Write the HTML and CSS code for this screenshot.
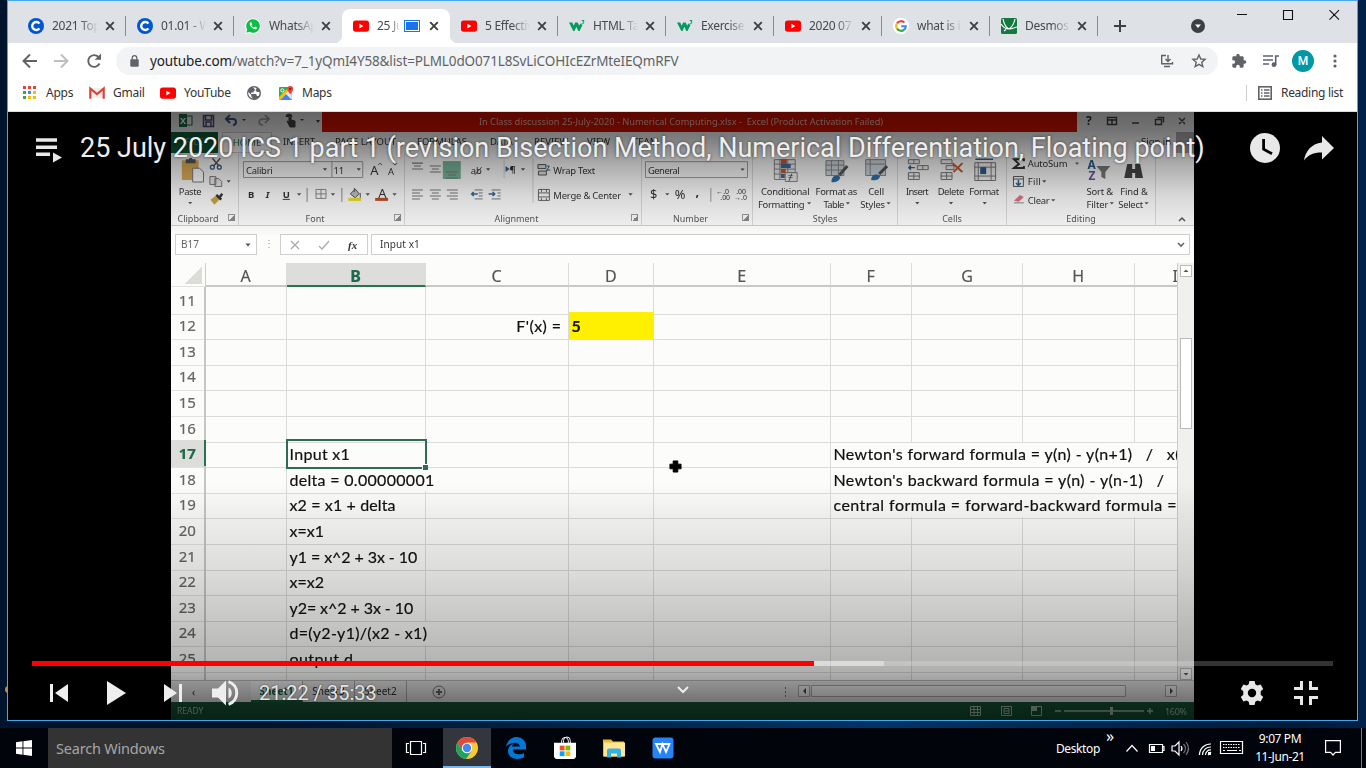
FILE: index.html
```html
<!DOCTYPE html>
<html lang="en">
<head>
<meta charset="utf-8">
<title>25 July 2020 ICS 1 part 1</title>
<link rel="stylesheet" href="styles.css">
</head>
<body>
<svg class="defs" width="0" height="0">
  <symbol id="x" viewBox="0 0 10 10"><path d="M1.2 1.2l7.6 7.6M8.8 1.2L1.2 8.8" stroke="#3c4043" stroke-width="1.9"/></symbol>
  <symbol id="yt" viewBox="0 0 16 16"><rect y="2.5" width="16" height="11.2" rx="2.6" fill="#f00"/><path d="M6.4 5.7v4.8l4-2.4z" fill="#fff"/></symbol>
  <symbol id="cc" viewBox="0 0 16 16"><circle cx="8" cy="8" r="8" fill="#0056d2"/><path d="M11.4 10.4A4 4 0 1 1 11.4 5.6" fill="none" stroke="#fff" stroke-width="2.4"/></symbol>
  <symbol id="w3" viewBox="0 0 16 16"><path d="M0 4.500h3.200l1.600 3.300 1.300-3.300h2.600l1.500 3.300 1-2.300 2.300 1.500-3 6H9.300L7.400 8.800 5.500 13H4.300z" fill="#059862"/><path d="M12.700 2.600h2.300l-1.100 1.300c1.500.2 1.200 2.200-1.200 1.700" fill="none" stroke="#059862"/></symbol>
  <symbol id="dr" viewBox="0 0 7 4"><path d="M.5.3h6L3.500 3.700z" fill="#555"/></symbol>
</svg>

<div class="desktop">
  <div class="shortcut"></div>
  <div class="window">
    <div class="tabstrip">
      <div class="tab first"><svg class="fav"><use href="#cc"/></svg><span class="tt">2021 Topics</span><svg class="cl"><use href="#x"/></svg></div>
      <div class="tab"><svg class="fav"><use href="#cc"/></svg><span class="tt">01.01 - Why</span><svg class="cl"><use href="#x"/></svg></div>
      <div class="tab nosep"><svg class="fav" viewBox="0 0 16 16"><path d="M0 16l1.200-4A7.800 7.800 0 1 1 4 14.900z" fill="#fff"/><path d="M1.300 14.700l.9-3.200A6.800 6.800 0 1 1 4.500 13.800z" fill="#09c144"/><path d="M5.300 4.300c-2 2 1.500 7 5.200 7 1.500-.2 1.700-1.700 1-2.100l-1.400-.6-1 1c-1.300-.4-2.100-1.300-2.600-2.400l.7-1-.8-1.800z" fill="#fff"/></svg><span class="tt">WhatsApp</span><svg class="cl"><use href="#x"/></svg></div>
      <div class="tab active"><svg class="fav"><use href="#yt"/></svg><span class="tt short">25 July</span><svg class="cast" viewBox="0 0 16 12"><rect x=".5" y=".5" width="15" height="11" fill="#fff" stroke="#1a73e8"/><rect x="2" y="2" width="12" height="8" fill="#1a73e8"/></svg><svg class="cl"><use href="#x"/></svg></div>
      <div class="tab"><svg class="fav"><use href="#yt"/></svg><span class="tt">5 Effective</span><svg class="cl"><use href="#x"/></svg></div>
      <div class="tab"><svg class="fav"><use href="#w3"/></svg><span class="tt">HTML Tags</span><svg class="cl"><use href="#x"/></svg></div>
      <div class="tab"><svg class="fav"><use href="#w3"/></svg><span class="tt">Exercise v</span><svg class="cl"><use href="#x"/></svg></div>
      <div class="tab"><svg class="fav"><use href="#yt"/></svg><span class="tt">2020 07 2</span><svg class="cl"><use href="#x"/></svg></div>
      <div class="tab"><svg class="fav" viewBox="0 0 16 16"><circle cx="8" cy="8" r="8" fill="#fff"/><g fill="none" stroke-width="2.100"><path d="M4 5.300A4.800 4.800 0 0 1 11.400 4.600" stroke="#ea4335"/><path d="M4 5.300a4.800 4.800 0 0 0 0 5.400" stroke="#fbbc05"/><path d="M4 10.700a4.800 4.800 0 0 0 7.200.9" stroke="#34a853"/><path d="M11.200 11.600A4.700 4.700 0 0 0 12.800 8.200H8.200" stroke="#4285f4"/></g></svg><span class="tt">what is in</span><svg class="cl"><use href="#x"/></svg></div>
      <div class="tab"><svg class="fav" viewBox="0 0 16 16"><rect width="16" height="16" rx="1.500" fill="#127a3f"/><path d="M0 6c2 3 4 5 8 5s6-2 8-2M2 1c1 5 2 8 6 10M14 1c-1 5-3 8-6 10M5 11.500L3 13" fill="none" stroke="#fff" stroke-width="1.200"/></svg><span class="tt">Desmos |</span><svg class="cl"><use href="#x"/></svg></div>
      <svg class="newtab" viewBox="0 0 12 12"><path d="M6 0v12M0 6h12" stroke="#3c4043" stroke-width="2"/></svg>
      <svg class="tabsearch" viewBox="0 0 14 14"><circle cx="7" cy="7" r="7" fill="#3c4043"/><path d="M4 5.400h6L7 9z" fill="#fff"/></svg>
      <svg class="wctl" viewBox="0 0 104 14"><path d="M0 6.500h10M46.500 2.500h9v9h-9zM92.500 2.200l9.500 9.500M102 2.200l-9.500 9.500" fill="none" stroke="#111" stroke-width="1.100"/></svg>
    </div>

    <div class="toolbar">
      <svg class="nav" viewBox="0 0 88 18"><g fill="none" stroke-width="1.900"><path d="M16 9H3M9 2.500L2.500 9 9 15.500" stroke="#5f6368"/><path d="M33 9h13M40 2.500L46.500 9 40 15.500" stroke="#bcbec1"/><path d="M78.500 11.500A5.900 5.900 0 1 1 77.500 5" stroke="#5f6368"/></g><path d="M80 1.500v6.300h-6.300z" fill="#5f6368"/></svg>
      <div class="omni">
        <svg class="lock" viewBox="0 0 9 12"><rect x=".3" y="4.200" width="8.400" height="7.500" rx="1" fill="#5f6368"/><path d="M2.200 5V3a2.300 2.300 0 0 1 4.600 0v2" fill="none" stroke="#5f6368" stroke-width="1.200"/></svg>
        <span class="url"><b>youtube.com</b>/watch?v=7_1yQmI4Y58&amp;list=PLML0dO071L8SvLiCOHIcEZrMteIEQmRFV</span>
        <svg class="inst" viewBox="0 0 14 14"><path d="M6 1.500H1.700v8.300h10.800V8M4 12.500h6M8 1v6M5.500 5L8 7.500 10.500 5" fill="none" stroke="#5f6368" stroke-width="1.400"/></svg>
        <svg class="star" viewBox="0 0 16 16"><path d="M8 2l1.800 4 4.300.4-3.300 2.900 1 4.300L8 11.400l-3.800 2.200 1-4.300-3.300-2.900L6.200 6z" fill="none" stroke="#5f6368" stroke-width="1.400"/></svg>
      </div>
      <svg class="ext" viewBox="0 0 24 24"><path fill="#5f6368" d="M20.500 11H19V7c0-1.100-.9-2-2-2h-4V3.500a2.500 2.500 0 0 0-5 0V5H4c-1.100 0-2 .9-2 2v3.800h1.500a2.700 2.700 0 0 1 0 5.400H2V20c0 1.100.9 2 2 2h3.800v-1.500a2.700 2.700 0 0 1 5.400 0V22H17c1.100 0 2-.9 2-2v-4h1.500a2.500 2.500 0 0 0 0-5z"/></svg>
      <svg class="queue" viewBox="0 0 16 14"><path d="M0 2h10M0 6h10M0 10h6M12.700 11V2H16" fill="none" stroke="#5f6368" stroke-width="1.600"/><circle cx="11" cy="10.700" r="2.400" fill="#5f6368"/></svg>
      <span class="avatar">M</span>
      <svg class="dots" viewBox="0 0 4 14"><g fill="#5f6368"><circle cx="2" cy="2" r="1.600"/><circle cx="2" cy="7" r="1.600"/><circle cx="2" cy="12" r="1.600"/></g></svg>
    </div>

    <div class="bookmarks">
      <svg class="b1" viewBox="0 0 13 13"><path fill="#ea4335" d="M0 0h3v3H0zM5 0h3v3H5zM10 0h3v3h-3z"/><path fill="#34a853" d="M0 5h3v3H0zM0 10h3v3H0z"/><path fill="#4285f4" d="M5 5h3v3H5z"/><path fill="#fbbc05" d="M10 5h3v3h-3zM5 10h3v3H5zM10 10h3v3h-3z"/></svg><span class="t1">Apps</span>
      <svg class="b2" viewBox="0 0 16 12"><path d="M1 1h14v10H1z" fill="#eee"/><path d="M1.300 11.700V1.500L8 7l6.700-5.500v10.200" fill="none" stroke="#db4437" stroke-width="2.200"/></svg><span class="t2">Gmail</span>
      <svg class="b3"><use href="#yt"/></svg><span class="t3">YouTube</span>
      <svg class="b4" viewBox="0 0 14 14"><circle cx="7" cy="7" r="7" fill="#5f6368"/><path d="M1.300 6l3 3v1.500l1.700 2A5.700 5.700 0 0 1 1.300 6zM6 1.300l3.500.6L9 4 7 4.800 6.500 6.500H4.300L4 8H9l1 2h1.500A5.700 5.700 0 0 0 12.500 6L10 6z" fill="#fff"/></svg>
      <svg class="b5" viewBox="0 0 15 14"><rect y="1" width="13" height="13" rx="1" fill="#34a853"/><path d="M0 13L12 1l1 12z" fill="#e8eaed"/><path d="M1 14L7 8l6 6z" fill="#4285f4"/><path d="M0 11L9 2l1 2-9 10H0z" fill="#fbbc05"/><circle cx="3.400" cy="4.400" r="1.600" fill="none" stroke="#fff"/><path d="M11.200 9C10.500 6 8.200 5.500 8.200 3a3 3 0 0 1 6 0c0 2.500-2.300 3-3 6z" fill="#ea4335"/><circle cx="11.200" cy="3" r="1.100" fill="#801a1a"/></svg><span class="t5">Maps</span>
      <div class="reading"><svg viewBox="0 0 14 14"><rect x=".8" y=".8" width="12.400" height="12.400" fill="none" stroke="#5f6368" stroke-width="1.600"/><path d="M3 4h1.500M6 4h5.500M3 7h1.500M6 7h5.500M3 10h1.500M6 10h5.500" stroke="#5f6368" stroke-width="1.400"/></svg><span>Reading list</span></div>
    </div>

    <div class="player">
      <div class="frame">
        <div class="xtitle">
          <svg class="quick" viewBox="171 112 151 20"><rect x="179" y="114" width="8" height="13" fill="#1b6b48"/><rect x="186" y="116" width="6" height="9" fill="none" stroke="#1b6b48"/><text x="180" y="124" class="xl">X</text><path d="M203.500 115.500h10v11h-10zM205.500 116v4h6v-4M206 126v-4h5v4" fill="none" stroke="#51487c" stroke-width="1.500"/><path d="M227 119h6c4 0 4 6 0 6M230 115l-4 4 4 4" fill="none" stroke="#37568d" stroke-width="2"/><path d="M269 119h-6c-5 0-5 6 0 6M265 115l4 4-4 4" fill="none" stroke="#999" stroke-width="1.600"/><path d="M289 116v6l-2-1 3 6h5v-6l-4-1v-4zM286 117a3 3 0 0 1 6 0" fill="#444" stroke="#444"/><g fill="#444"><path d="M242 119h4l-2 2zM300 119h4l-2 2zM316 120h4l-2 3z"/></g></svg>
          <div class="redbar">In Class discussion 25-July-2020 - Numerical Computing.xlsx -&nbsp; Excel (Product Activation Failed)</div>
          <svg class="xctl" viewBox="1077 112 117 20"><text x="1086" y="125" class="q">?</text><path d="M1107.500 117.500h9v7h-9zM1107 120h10M1112 119v5M1132 123h7M1155.500 119.500h6v5h-6zM1157.500 117.500h6v5M1179 118l6 6M1185 118l-6 6" fill="none" stroke="#444" stroke-width="1.400"/></svg>
        </div>
        <div class="xtabs"><span class="file">FILE</span><span class="home">HOME</span><span class="m1">INSERT</span><span class="m2">PAGE LAYOUT</span><span class="m3">FORMULAS</span><span class="m4">DATA</span><span class="m5">REVIEW</span><span class="m6">VIEW</span><span class="m7">TEAM</span><span class="sign">Sign in</span><span class="face"></span></div>
        <div class="ribbon">
          <div class="grp g1"><svg viewBox="171 153 68 57"><rect x="182" y="160" width="17" height="20" fill="#d9ac56"/><path d="M186 163v-4h3q2-3 4 0h3v4z" fill="#555"/><path d="M193 168h7l4 4v10h-11z" fill="#fff" stroke="#777"/><path d="M213 158l7 8M221 158l-7 8" stroke="#555" stroke-width="1.500"/><circle cx="213" cy="167" r="2" fill="none" stroke="#3b5f8f" stroke-width="1.300"/><circle cx="220" cy="167" r="2" fill="none" stroke="#3b5f8f" stroke-width="1.300"/><path d="M210.500 176.500h6v8h-6zM215.500 178.500h4l3 3v5h-7z" fill="#e8e8e8" stroke="#777"/><path d="M211 200l7-5 3 4-6 6z" fill="#c7a43e"/><path d="M217 195l5 5M220 198l3-4" stroke="#333" stroke-width="2.500"/><text x="179" y="195" textLength="23">Paste</text><use href="#dr" x="188" y="202" width="5" height="3"/><use href="#dr" x="227" y="180" width="5" height="3"/></svg><div class="gl">Clipboard</div></div>
          <div class="grp g2"><svg viewBox="239 153 166 57"><path d="M243.500 161.500h120v16h-120zM332.500 161.500v16" fill="none" stroke="#999"/><text x="246" y="174" textLength="27">Calibri</text><text x="334" y="174">11</text><use href="#dr" x="323" y="168" width="5" height="3"/><use href="#dr" x="357" y="168" width="5" height="3"/><text x="371" y="175" class="big">A</text><text x="389" y="175">A</text><path d="M379 165l2-2 2 2M394 163l2 2 2-2" stroke="#356399" fill="none"/><g class="bold"><text x="248" y="198">B</text><text x="266" y="198" font-style="italic">I</text><text x="283" y="198" text-decoration="underline">U</text></g><path d="M316.500 189.500h10v9h-10zM321.500 189v10M316 194h11M307.500 188v14M342.500 188v14" fill="none" stroke="#888"/><path d="M351 194l5-5 4 5-4 4zM355 192v-4M361 193v5" fill="#bbb" stroke="#555"/><path d="M349 198h13v3h-13z" fill="#e8d91f"/><text x="379" y="198" class="big">A</text><path d="M376 198h13v3h-13z" fill="#b85024"/><use href="#dr" x="297" y="193" width="5" height="3"/><use href="#dr" x="331" y="193" width="5" height="3"/><use href="#dr" x="366" y="193" width="5" height="3"/><use href="#dr" x="393" y="193" width="5" height="3"/></svg><div class="gl">Font</div></div>
          <div class="grp g3"><svg viewBox="405 153 237 57"><rect x="443" y="161" width="18" height="18" fill="#75b397"/><path d="M412 163h11M414 166h7M412 169h11M430 166h11M432 169h7M430 172h11M446 172h12M448 175h8M446 178h12M412 190h11M412 193h8M412 196h11M412 199h8M430 190h11M432 193h7M430 196h11M432 199h7M447 190h11M450 193h8M447 196h11M450 199h8" stroke="#777" stroke-width="1.100"/><text x="471" y="174">ab</text><path d="M475 175l7-8" stroke="#555"/><path d="M506 166v6l4-3z" fill="#2c6799"/><text x="510" y="173" class="bold">¶</text><path d="M475 190h8M479 193h4M479 196h4M475 199h8M492 190h9M498 193h3M498 196h3M492 199h9" stroke="#777"/><path d="M478 194h-6M474 192l-2 2 2 2M489 194h6M493 192l2 2-2 2" stroke="#2c6799" stroke-width="1.600" fill="none"/><path d="M533.500 158v45M504.500 160v18" stroke="#ccc"/><path d="M538.500 164.500h8v4h-8zM539 171h8v4h-8zM547 170h4" fill="#ddd" stroke="#555"/><path d="M547 166h3l-3 5" fill="none" stroke="#356399"/><text x="554" y="174" textLength="42">Wrap Text</text><path d="M539 189.500h11v11h-11zM539 193h11M539 197h11M542 189v3M547 189v3M542 198v3M547 198v3" fill="none" stroke="#666"/><text x="554" y="199" textLength="68">Merge &amp; Center</text><use href="#dr" x="486" y="168" width="5" height="3"/><use href="#dr" x="521" y="168" width="5" height="3"/><use href="#dr" x="629" y="193" width="5" height="3"/></svg><div class="gl">Alignment</div></div>
          <div class="grp g4"><svg viewBox="642 153 111 57"><path d="M645.500 161.500h103v16h-103zM711.500 188v14" fill="none" stroke="#999"/><text x="648" y="174" textLength="32">General</text><use href="#dr" x="741" y="168" width="5" height="3"/><text x="650" y="199" class="big">$</text><text x="675" y="199" class="big">%</text><text x="696" y="196" class="big bold">,</text><use href="#dr" x="665" y="193" width="5" height="3"/><g class="tiny"><text x="717" y="194">←.0</text><text x="721" y="200">.00</text><text x="737" y="194">.00</text><text x="735" y="200">→.0</text></g></svg><div class="gl">Number</div></div>
          <div class="grp g5"><svg viewBox="753 153 145 57"><path d="M774.500 159.500h21v20h-21zM774 164h22M774 169h22M774 174h22M780 159v20M788 159v20" fill="#eee" stroke="#888"/><path d="M781 159h6v5h-6zM781 169h5v4h-5z" fill="#c35a2e"/><path d="M781 164h10v4h-10zM781 174h4v4h-4z" fill="#42699b"/><path d="M785.500 172.500h12v9h-12z" fill="#eee" stroke="#888"/><text x="788" y="180">≠</text><path d="M826.500 160.500h18v15h-18zM826 165h19M826 170h19M832 160v15M839 160v15M866.500 159.500h20v16h-20zM867 164h20M871 159v16" fill="#ccd5de" stroke="#888"/><path d="M848 166l-8 9M888 166l-8 8" stroke="#555" stroke-width="3"/><path d="M832 182c0-7 6-8 9-5-1 4-4 6-9 5zM872 180c0-6 6-7 9-4-1 4-4 5-9 4z" fill="#2f6ea8"/><text x="761" y="195" textLength="49">Conditional</text><text x="758" y="208" textLength="47">Formatting</text><text x="816" y="195" textLength="42">Format as</text><text x="824" y="208" textLength="21">Table</text><text x="869" y="195" textLength="16">Cell</text><text x="861" y="208" textLength="25">Styles</text><use href="#dr" x="807" y="202" width="5" height="3"/><use href="#dr" x="846" y="202" width="5" height="3"/><use href="#dr" x="887" y="202" width="5" height="3"/></svg><div class="gl">Styles</div></div>
          <div class="grp g6"><svg viewBox="898 153 109 57"><path d="M908.500 159.500h11v4h-11zM914 159v4M908.500 172.500h11v7h-11zM914 172v8M908 176h12M917.500 165.500h11v4h-11zM923 165v4M941.500 159.500h11v4h-11zM946.500 165.500h8v4h-8zM941.500 172.500h11v7h-11zM947 172v8M941 176h12M975.500 162.500h21v18h-21zM979 162v19M992 162v19M975 167h22M975 176h22" fill="#eee" stroke="#777"/><path d="M909 167.500h6M911 165.500l-2 2 2 2M976 159h18" stroke="#2f6593" stroke-width="1.500" fill="none"/><path d="M953 163l10 9M963 163l-9 9" stroke="#c35a2e" stroke-width="2"/><path d="M981 167h6v7h-6z" fill="#285a8f"/><text x="906" y="195" textLength="23">Insert</text><text x="938" y="195" textLength="27">Delete</text><text x="970" y="195" textLength="30">Format</text><use href="#dr" x="915" y="202" width="5" height="3"/><use href="#dr" x="949" y="202" width="5" height="3"/><use href="#dr" x="983" y="202" width="5" height="3"/></svg><div class="gl">Cells</div></div>
          <div class="grp g7"><svg viewBox="1007 153 149 57"><path d="M1024 161v-2h-10l5 5-5 4h10v-2" fill="none" stroke="#333" stroke-width="2"/><text x="1028" y="167" textLength="40">AutoSum</text><path d="M1013.500 176.500h10v10h-10zM1013 179h11" fill="#fff" stroke="#555"/><path d="M1018.500 180v5M1016 183l2.500 2.500 2.500-2.500" stroke="#2f6593" stroke-width="1.600" fill="none"/><text x="1028" y="185" textLength="13">Fill</text><path d="M1014 201l6-6 4 2-5 5z" fill="#dd7183"/><path d="M1014 203h10" stroke="#888"/><text x="1028" y="204" textLength="22">Clear</text><text x="1088" y="169" class="az blue">A</text><text x="1089" y="180" class="az violet">Z</text><path d="M1097 166h14l-5 6v7l-4-2v-5z" fill="#777"/><path d="M1125 178l3-14h5v5h3v-5h5l3 14h-8v-5h-3v5z" fill="#444"/><text x="1087" y="195" textLength="27">Sort &amp;</text><text x="1087" y="208" textLength="22">Filter</text><text x="1121" y="195" textLength="28">Find &amp;</text><text x="1119" y="208" textLength="25">Select</text><use href="#dr" x="1075" y="162" width="5" height="3"/><use href="#dr" x="1042" y="180" width="5" height="3"/><use href="#dr" x="1051" y="199" width="5" height="3"/><use href="#dr" x="1110" y="202" width="5" height="3"/><use href="#dr" x="1145" y="202" width="5" height="3"/></svg><div class="gl">Editing</div></div>
          <svg class="collapse" viewBox="0 0 8 6"><path d="M1 5l3-3 3 3" fill="none" stroke="#555" stroke-width="1.500"/></svg>
        </div>
        <div class="fbar">
          <div class="fbox name">B17<svg><use href="#dr"/></svg></div><span class="fdots">⋮</span>
          <div class="fbox fx"><svg viewBox="0 0 86 20"><path d="M10 6l8 8M18 6l-8 8M38 11l3 3 7-8" fill="none" stroke="#aaa" stroke-width="1.300"/><text x="67" y="14">fx</text></svg></div>
          <div class="fbox val">Input x1<svg viewBox="0 0 8 6"><path d="M1 1l3 3 3-3" fill="none" stroke="#666" stroke-width="1.600"/></svg></div>
        </div>
        <div class="sheet">
          <div class="grid">
            <div class="row head"><b class="corner"></b><i>A</i><i class="sel">B</i><i>C</i><i>D</i><i>E</i><i>F</i><i>G</i><i>H</i><i class="ci">I</i></div>
            <div class="row"><b>11</b><i></i><i></i><i></i><i></i><i></i><i></i><i></i><i></i><i></i></div>
            <div class="row"><b>12</b><i></i><i></i><i class="right"><span class="c0">F'(x) =</span></i><i class="yellow">5</i><i></i><i></i><i></i><i></i><i></i></div>
            <div class="row"><b>13</b><i></i><i></i><i></i><i></i><i></i><i></i><i></i><i></i><i></i></div>
            <div class="row"><b>14</b><i></i><i></i><i></i><i></i><i></i><i></i><i></i><i></i><i></i></div>
            <div class="row"><b>15</b><i></i><i></i><i></i><i></i><i></i><i></i><i></i><i></i><i></i></div>
            <div class="row"><b>16</b><i></i><i></i><i></i><i></i><i></i><i></i><i></i><i></i><i></i></div>
            <div class="row"><b class="sel">17</b><i></i><i class="cursor"><span class="c1">Input x1</span></i><i></i><i></i><i></i><i class="s4"><span class="n1">Newton's forward formula = y(n) - y(n+1) &nbsp; / &nbsp; x(n)</span></i></div>
            <div class="row"><b>18</b><i></i><i class="s2"><span class="c1">delta = 0.00000001</span></i><i></i><i></i><i class="s4"><span class="n2">Newton's backward formula = y(n) - y(n-1) &nbsp; /</span></i></div>
            <div class="row"><b>19</b><i></i><i><span class="c2">x2 = x1 + delta</span></i><i></i><i></i><i></i><i class="s4"><span class="n3">central formula = forward-backward formula =</span></i></div>
            <div class="row"><b>20</b><i></i><i>x=x1</i><i></i><i></i><i></i><i></i><i></i><i></i><i></i></div>
            <div class="row"><b>21</b><i></i><i><span class="c3">y1 = x^2 + 3x - 10</span></i><i></i><i></i><i></i><i></i><i></i><i></i><i></i></div>
            <div class="row"><b>22</b><i></i><i>x=x2</i><i></i><i></i><i></i><i></i><i></i><i></i><i></i></div>
            <div class="row"><b>23</b><i></i><i><span class="c3">y2= x^2 + 3x - 10</span></i><i></i><i></i><i></i><i></i><i></i><i></i><i></i></div>
            <div class="row"><b>24</b><i></i><i class="s2"><span class="c1">d=(y2-y1)/(x2 - x1)</span></i><i></i><i></i><i></i><i></i><i></i><i></i></div>
            <div class="row"><b>25</b><i></i><i><span class="c0">output d</span></i><i></i><i></i><i></i><i></i><i></i><i></i><i></i></div>
            <div class="row"><b>26</b><i></i><i></i><i></i><i></i><i></i><i></i><i></i><i></i><i></i></div>
          </div>
          <div class="vscroll"><svg viewBox="0 0 12 12"><rect x=".5" y=".5" width="11" height="11" fill="#fff" stroke="#bbb"/><path d="M3.500 7h5L6 4.500z" fill="#555"/></svg><div class="thumb"></div><svg class="dn" viewBox="0 0 12 12"><rect x=".5" y=".5" width="11" height="11" fill="#fff" stroke="#bbb"/><path d="M3.500 5h5L6 7.500z" fill="#555"/></svg></div>
        </div>
        <div class="xsheets"><span class="prev">‹</span><span class="s on">Sheet1</span><span class="s">Sheet3</span><span class="s">Sheet2</span><svg class="plus" viewBox="0 0 14 14"><circle cx="7" cy="7" r="6" fill="none" stroke="#777"/><path d="M7 4v6M4 7h6" stroke="#666" stroke-width="2"/></svg><svg class="hs" viewBox="785 681 400 21"><path d="M785.500 687v2M785.500 691v2M785.500 695v2" stroke="#777"/><path d="M798.500 685.500h11v11h-11zM811.500 685.500h314v11h-314zM1165.500 685.500h11v11h-11z" fill="#f4f4f4" stroke="#aaa"/><path d="M806 688v6l-3-3zM1170 688v6l3-3z" fill="#444"/></svg></div>
        <div class="xstatus"><span>READY</span><svg viewBox="960 702 234 18"><g fill="none" stroke="#b4ccbf"><path d="M970.500 706.500h10v9h-10zM970 709.500h11M970 712.500h11M974 706v10M977.500 706v10M1001.500 706.500h10v9h-10zM1004 708.500h5v5h-5zM1004 711h5M1031.500 706.500h10v9h-10z"/><path d="M1055 711h6M1064 711h80M1147 711h6M1150 708v6" stroke-width="1.400"/></g><path d="M1031 706h6v5h-6zM1110 707h3v8h-3z" fill="#b4ccbf"/><text x="1165" y="715" textLength="22">160%</text></svg></div>
      </div>
      <svg class="pointer" viewBox="0 0 14 14"><path d="M4.500 1h5v3.500H13v5H9.500V13h-5V9.500H1v-5h3.500z" stroke="#000" stroke-linejoin="round" fill="#000"/></svg>
      <div class="shade"></div>
      <div class="ptop">
        <svg class="plist" viewBox="0 0 26 25"><path d="M0 2h21M0 9.200h21M0 16.300h14" stroke="#e8e8e8" stroke-width="3.600"/><path d="M17 14.500v10l9-5z" fill="#e8e8e8"/></svg>
        <span class="vtitle">25 July 2020 ICS 1 part 1 (revision Bisection Method, Numerical Differentiation, Floating point)</span>
        <svg class="later" viewBox="0 0 30 30"><circle cx="15" cy="15" r="15" fill="#e8e8e8"/><path d="M13.600 6v10.200l8.400 4.600" fill="none" stroke="#000" stroke-width="2.800"/></svg>
        <svg class="share" viewBox="0 0 30 25"><path d="M18 0l12 12-12 11.500v-7C9 16.500 4 19 0 24.500 1.500 15.500 7 8 18 6.600z" fill="#e8e8e8"/></svg>
      </div>
      <div class="pbot">
        <div class="progress"><i class="played"></i><i class="loaded"></i></div>
        <div class="pctl">
          <svg class="c-prev" viewBox="0 0 18 18"><path d="M0 0h3v18H0zM18 0v18L5 9z" fill="#eee"/></svg>
          <svg class="c-play" viewBox="0 0 19 24"><path d="M0 0l19 12L0 24z" fill="#eee"/></svg>
          <svg class="c-next" viewBox="0 0 18 18"><path d="M15 0h3v18h-3zM0 0v18l13-9z" fill="#eee"/></svg>
          <svg class="c-vol" viewBox="0 0 28 26"><path d="M0 8.500v9h6l8 8V.5l-8 8z" fill="#eee"/><path d="M16.500 7.500a6.300 6.300 0 0 1 0 11z" fill="#eee"/><path d="M16.500 1.600a12 12 0 0 1 0 22.800" fill="none" stroke="#eee" stroke-width="3"/></svg>
          <span class="time">21:22 / 35:33</span>
          <svg class="c-chev" viewBox="0 0 12 8"><path d="M1 1l5 5 5-5" fill="none" stroke="#eee" stroke-width="2"/></svg>
          <svg class="c-gear" viewBox="0 0 24 24"><path fill="#e8e8e8" fill-rule="evenodd" d="M9.400 0h5.200l.7 3.300 2.100 1.200 3.200-1.100L23.200 8l-2.500 2.300v3.400l2.500 2.300-2.600 4.600-3.200-1.100-2.100 1.200-.7 3.300H9.400l-.7-3.300-2.100-1.200-3.200 1.100L.8 16l2.500-2.300v-3.400L.8 8l2.600-4.600 3.200 1.100 2.100-1.200zM12 7.800a4.200 4.200 0 1 0 0 8.400 4.200 4.200 0 0 0 0-8.400z"/></svg>
          <svg class="c-full" viewBox="0 0 24 24"><path d="M7.500 0v7.500H0M16.500 0v7.500H24M0 16.500h7.500V24M24 16.500h-7.500V24" fill="none" stroke="#e8e8e8" stroke-width="3"/></svg>
        </div>
      </div>
    </div>
  </div>

  <div class="taskbar">
    <div class="start"><svg viewBox="0 0 16 16"><path d="M0 2.200l6.500-.9v6.200H0zM7.400 1.200L16 0v7.500H7.400zM0 8.500h6.500v6.200L0 13.800zM7.400 8.500H16V16l-8.600-1.200z" fill="#fff"/></svg></div>
    <div class="search">Search Windows</div>
    <div class="tv"><svg viewBox="0 0 20 14"><path d="M4.500.5h11v13h-11zM3 2.500H.5v9H3M17 2.500h2.500v9H17" fill="none" stroke="#fff" stroke-width="1.200"/></svg></div>
    <div class="app on"><svg viewBox="0 0 22 22"><circle cx="11" cy="11" r="11" fill="#fbc735"/><path d="M1.500 5.500A11 11 0 0 1 20.500 5.500H11L6.200 13.800z" fill="#dd4b3e"/><path d="M1.500 5.500A11 11 0 0 0 10 22l5.700-8.300H6.300z" fill="#1da362"/><circle cx="11" cy="11" r="5.200" fill="#fff"/><circle cx="11" cy="11" r="4.200" fill="#4587f3"/></svg></div>
    <div class="app"><svg viewBox="0 0 20 22"><path d="M0 9.500C1.500 3 6 0 10.500 0 16 0 20 4 20 9v3.500H6.800c.2 5.300 7 6 11.200 3.400v4.400C11 24 2 21.500 2 14c0-4 3-6.500 5.500-7.600-1 1-1.300 2-1.300 3.200h7.600c0-5-8.300-5.500-13.800-.1z" fill="#0078d7"/></svg></div>
    <div class="app"><svg class="st" viewBox="0 0 23 23"><path d="M8 7V4a3.500 3.500 0 0 1 7 0v3M10 6V3.500a3.500 3.500 0 0 1 7 0V7" fill="none" stroke="#fff"/><path d="M0 6h23v15l-2 2H2l-2-2z" fill="#fff"/><path d="M6 9h5v5H6z" fill="#f25022"/><path d="M12 9h5v5h-5z" fill="#7fba00"/><path d="M6 15h5v5H6z" fill="#00a4ef"/><path d="M12 15h5v5h-5z" fill="#ffb900"/></svg></div>
    <div class="app"><svg viewBox="0 0 22 19"><path d="M0 1h8l2 2h11v15H0z" fill="#e8b931"/><path d="M1 4h21v14H1z" fill="#ffe694"/><path d="M4 19v-7q0-2 2-2h10q2 0 2 2v7h-4v-4H8v4z" fill="#35b2e4"/></svg></div>
    <div class="app"><svg viewBox="0 0 22 22"><rect x=".5" y=".5" width="21" height="21" rx="3" fill="#2684f7"/><path d="M4 7h13.500L14 15l-3.500-8L8 15z" fill="none" stroke="#fff" stroke-width="1.800"/></svg></div>
    <div class="tray">
      <span class="desk">Desktop</span><span class="more">»</span>
      <svg class="tricons" viewBox="1124 736 120 24"><g fill="none" stroke="#fff" stroke-width="1.200"><path d="M1126.500 751.500l5.500-6 5.500 6"/><path d="M1149.500 744.500h13v8h-13zM1163 746.500h1v4h-1"/><path d="M1172 746h3l4-4v13l-4-4h-3z"/><path d="M1181 746q2 2.500 0 5"/><path d="M1183.500 744q4 4.500 0 9M1186 742q5 6.500 0 13" stroke="#777"/><path d="M1199.500 755a11 11 0 0 1 11.500-11M1202.500 755a8 8 0 0 1 8.500-8M1205.500 755a5 5 0 0 1 5.500-5M1208 755l3-3"/><path d="M1220.500 741.500h22v12h-22z"/><path d="M1223 744.500h17M1223 747.500h17" stroke-dasharray="1.500 1"/><path d="M1223 750.500h2M1227 750.500h10M1239 750.500h2"/></g><path d="M1151 746h4v5h-4zM1208 752h3v3h-3z" fill="#fff"/></svg>
      <div class="clock"><span>9:07 PM</span><span>11-Jun-21</span></div>
      <svg class="note" viewBox="0 0 16 16"><path d="M.6.600h14.800v11.800h-5L8 15l-2.400-2.600h-5z" fill="none" stroke="#fff" stroke-width="1.200"/></svg>
      <i class="peek"></i>
    </div>
  </div>
</div>
</body>
</html>
```

FILE: styles.css
```css
* { box-sizing: border-box; }
body { margin: 0; width: 1366px; height: 768px; overflow: hidden; font-family: "Noto Sans", sans-serif; }
svg { display: block; flex: none; overflow: visible; }
.defs { position: absolute; }
.desktop { position: relative; width: 1366px; height: 768px; display: flex; flex-direction: column; background: linear-gradient(90deg, #00142d 0, #00142d 20%, #003566 65%, #001b3b 95%, #002149 100%); }
.shortcut { position: absolute; left: 5px; top: 686px; width: 4px; height: 7px; border-radius: 4px 0 0 4px; background: #c18a4b; }
.window { position: relative; z-index: 1; width: 1351px; height: 721px; margin-left: 7px; border: 1px solid #46a8ec; background: #fff; display: flex; flex-direction: column; flex: none; }

.tabstrip { height: 42px; background: #dee1e6; display: flex; align-items: flex-start; padding-left: 9px; position: relative; }
.tab { position: relative; width: 108px; height: 34px; margin-top: 8px; display: flex; align-items: center; padding: 0 11px; flex: none; }
.tab.first { width: 109px; }
.tab::after { content: ""; position: absolute; right: 0; top: 7px; width: 1px; height: 20px; background: #888c91; }
.tab.nosep::after, .tab.active::after { display: none; }
.fav { width: 16px; height: 16px; margin-right: 8px; }
.tt { width: 46px; font-size: 12px; letter-spacing: -.3px; line-height: 18px; white-space: nowrap; overflow: hidden; color: #45494d; -webkit-mask-image: linear-gradient(90deg, #000 60%, transparent 100%); mask-image: linear-gradient(90deg, #000 60%, transparent 100%); }
.tt.short { width: 23px; }
.cast { width: 16px; height: 12px; margin: 0 0 0 4px; }
.cl { width: 10px; height: 10px; margin-left: 7px; }
.cast + .cl { margin-left: 9px; }
.active { background: #fff; border-radius: 8px 8px 0 0; }
.active::before { content: ""; position: absolute; left: -8px; right: -8px; bottom: 0; height: 8px; background: radial-gradient(circle at 0 0, transparent 8px, #fff 8.500px) 0 0/8px 8px no-repeat, radial-gradient(circle at 100% 0, transparent 8px, #fff 8.500px) 100% 0/8px 8px no-repeat; }
.newtab { width: 12px; height: 12px; margin: 19px 0 0 16px; }
.tabsearch { width: 14px; height: 14px; margin: 18px 0 0 65px; }
.wctl { width: 104px; height: 14px; margin: 7px 0 0 32px; }

.toolbar { height: 36px; display: flex; align-items: center; padding-left: 13px; }
.nav { width: 88px; height: 18px; }
.omni { width: 1102px; height: 28px; border-radius: 14px; background: #f1f3f4; margin-left: 7px; display: flex; align-items: center; padding-left: 14px; }
.lock { width: 9px; height: 12px; }
.url { width: 1020px; flex: none; padding-left: 11px; font-size: 13.500px; white-space: nowrap; color: #5f6368; letter-spacing: -.13px; }
.url b { font-weight: 400; color: #202124; }
.inst { width: 14px; height: 14px; margin-left: 1px; }
.star { width: 16px; height: 16px; margin-left: 17px; }
.ext { width: 16px; height: 16px; margin-left: 13px; }
.queue { width: 16px; height: 14px; margin-left: 16px; }
.avatar { width: 22px; height: 22px; border-radius: 50%; background: #0097a7; color: #fff; font: 500 12px/22px Roboto, sans-serif; text-align: center; margin-left: 13px; }
.dots { width: 4px; height: 14px; margin-left: 19px; }

.bookmarks { height: 33px; border-bottom: 1px solid #dadce0; display: flex; align-items: center; padding: 0 14px 5px 15px; font-size: 12px; letter-spacing: -.25px; color: #333; }
.bookmarks span { white-space: nowrap; }
.b1 { width: 13px; height: 13px; margin-right: 10px; }
.t1 { width: 43px; }
.b2 { width: 16px; height: 12px; margin-right: 8px; }
.t2 { width: 47px; }
.b3 { width: 16px; height: 16px; margin-right: 8px; }
.t3 { width: 63px; }
.b4 { width: 14px; height: 14px; margin-right: 18px; }
.b5 { width: 15px; height: 14px; margin-right: 8px; }
.reading { margin-left: auto; height: 16px; border-left: 1px solid #ccc; padding-left: 11px; display: flex; align-items: center; gap: 9px; letter-spacing: -.3px; }
.reading svg { width: 14px; height: 14px; }

.player { position: relative; flex: 1; background: #000; overflow: hidden; }
.frame { width: 1023px; height: 608px; margin-left: 163px; background: #fcfcfb; display: flex; flex-direction: column; color: #333; font-size: 9.500px; filter: blur(.45px); overflow: hidden; }
.frame text { font-size: 9.500px; fill: #333; font-family: "Noto Sans", sans-serif; }
.frame .big, .frame .big text { font-size: 13px; }
.frame .bold, .frame .bold text { font-weight: 700; }
.frame .tiny text { font-size: 7px; }
.frame .az { font-size: 12px; font-weight: 700; }
.frame .blue { fill: #285a8f; }
.frame .violet { fill: #6b4fa0; }
.frame text.xl { font-size: 9px; fill: #fff; font-weight: 700; }
.frame text.q { font-size: 12px; font-weight: 700; }
.xtitle { height: 20px; flex: none; display: flex; background: #f0f0f0; }
.quick { width: 151px; height: 20px; }
.redbar { width: 755px; text-align: center; background: #d71200; color: #f4c0b2; line-height: 20px; font-size: 9.200px; padding-right: 37px; white-space: nowrap; }
.xctl { width: 117px; height: 20px; }
.xtabs { height: 21px; flex: none; display: flex; line-height: 20px; background: #f5f5f5; white-space: nowrap; font-size: 9.500px; }
.xtabs span { flex: none; }
.file { width: 47px; text-align: center; background: #0c5c38; color: #5c9a7c; }
.home { width: 50px; margin: 0 4px; text-align: center; border: 1px solid #ccc; color: #2b6e50; background: #fcfcfc; }
.m1 { width: 52px; padding-left: 7px; } .m2 { width: 82px; padding-left: 7px; } .m3 { width: 79px; padding-left: 7px; } .m4 { width: 42px; padding-left: 1px; } .m5 { width: 52px; padding-left: 3px; } .m6 { width: 46px; padding-left: 4px; } .m7 { width: 50px; padding-left: 4px; }
.sign { margin-left: auto; width: 35px; } .face { width: 18px; background: #aaa; }
.ribbon { height: 73px; flex: none; display: flex; background: #f6f6f6; border-bottom: 1px solid #ccc; }
.grp { border-right: 1px solid #d5d5d5; flex: none; position: relative; }
.grp > svg { height: 57px; width: 100%; }
.gl { text-align: center; line-height: 16px; margin-top: 1px; color: #555; font-size: 9px; height: 14px; }
.g1 { width: 68px; } .g1 .gl { padding-right: 13px; } .g2 { width: 166px; } .g2 .gl { padding-right: 13px; } .g3 { width: 237px; } .g3 .gl { padding-right: 13px; } .g4 { width: 111px; } .g4 .gl { padding-right: 13px; } .g5 { width: 145px; } .g6 { width: 109px; } .g7 { width: 149px; }
.g1::after, .g2::after, .g3::after, .g4::after { content: ""; position: absolute; right: 3px; bottom: 4px; width: 6px; height: 6px; border: solid #999; border-width: 1px 0 0 1px; background: linear-gradient(135deg, transparent 50%, #888 50%); }
.collapse { width: 8px; height: 6px; margin: 63px 0 0 22px; }
.fbar { height: 37px; flex: none; padding: 8px 4px 8px; display: flex; font-size: 10px; }
.fbox { height: 21px; border: 1px solid #cfcfcf; background: #fff; line-height: 19px; display: flex; align-items: center; }
.name { width: 82px; padding: 0 5px; justify-content: space-between; color: #666; }
.name svg { width: 6px; height: 4px; }
.fdots { width: 23px; text-align: center; line-height: 19px; color: #999; }
.fx { width: 88px; } .fx svg { width: 86px; height: 20px; }
.frame .fx text { font: italic 700 11px "Liberation Serif", serif; }
.val { flex: 1; margin-left: 3px; padding: 0 4px 0 8px; justify-content: space-between; letter-spacing: .1px; }
.val svg { width: 8px; height: 6px; }
.sheet { height: 418px; flex: none; display: flex; overflow: hidden; border-bottom: 1px solid #bbb; }
.grid { width: 1007px; overflow: hidden; border-right: 1px solid #ccc; }
.row { display: grid; grid-template-columns: 34.500px 81px 139px 143px 85.500px 176.500px 81.500px 111px 111.500px 43px; height: 25.600px; font: 16px/27px Lato, sans-serif; color: #111; -webkit-text-stroke: .2px; }
.row b { font: 15px/27px "Noto Sans", sans-serif; text-align: center; color: #666; border-right: 2px solid #c5c7c5; border-bottom: 1px solid #e2e2e2; }
.row i { font-style: normal; border-right: 1px solid #d9dcd9; border-bottom: 1px solid #d9dcd9; white-space: pre; padding-left: 3px; overflow: hidden; }
.row .s4 { grid-column: span 4; } .row .s2 { grid-column: span 2; }
.n1 { letter-spacing: .37px; } .n2 { letter-spacing: .4px; } .n3 { letter-spacing: .45px; }
.c0 { letter-spacing: .42px; } .c1 { letter-spacing: .3px; } .c2 { letter-spacing: .12px; } .c3 { letter-spacing: -.07px; }
.row.head { height: 23.600px; }
.row.head i { padding: 0; text-align: center; font: 16px/27px "Noto Sans", sans-serif; color: #555; border-bottom: 2px solid #c6c9c6; }
.row.head .corner { border-right: 1px solid #ccc; background: linear-gradient(135deg, transparent 50%, #dcdcd9 50%) 14px 4px/17px 17px no-repeat; }
.row.head .sel { background: #dddedc; color: #1e6b4c; font-weight: 700; border-bottom-color: #26734d; }
.row.head .ci { text-align: left; padding-left: 38px; border-right: 0; }
.row b.sel { background: #dddedc; color: #1e6b4c; font-weight: 700; border-right-color: #26734d; }
.row .right { text-align: right; padding-right: 6px; }
.row .yellow { background: #ffef00; font-weight: 700; }
.row .cursor { outline: 2px solid #2f6d52; outline-offset: -1px; position: relative; overflow: visible; }
.row .cursor::after { content: ""; position: absolute; right: -3px; bottom: -3px; width: 5px; height: 5px; background: #2f6d52; border: 1px solid #fff; border-width: 1px 0 0 1px; }
.vscroll { width: 16px; padding: 2px 2px 0; background: #f0f0ef; display: flex; flex-direction: column; }
.vscroll svg { width: 12px; height: 12px; }
.thumb { height: 91px; width: 12px; margin-top: 61px; background: #fff; border: 1px solid #bbb; }
.vscroll .dn { margin-top: auto; margin-bottom: 0; }
.xsheets { height: 21px; flex: none; display: flex; align-items: center; background: #e9e9e9; font-size: 10px; }
.prev { width: 80px; padding-left: 21px; }
.s { width: 52px; height: 21px; line-height: 20px; text-align: center; border-right: 1px solid #aaa; }
.on { background: #f4f4f4; color: #14663d; font-weight: 700; border-bottom: 2px solid #14663d; }
.plus { width: 14px; height: 14px; margin-left: 25px; }
.hs { width: 400px; height: 21px; margin-left: 339px; }
.xstatus { height: 18px; flex: none; background: #15583a; display: flex; justify-content: space-between; color: #b4ccbf; line-height: 18px; padding-left: 6px; font-size: 8.500px; }
.xstatus svg { width: 234px; height: 18px; }
.frame .xstatus text { fill: #b4ccbf; font-size: 9px; }
.pointer { position: absolute; left: 661px; top: 348px; width: 13px; height: 13px; }
.shade { position: absolute; inset: 0; background: linear-gradient(180deg, rgba(0,0,0,.58) 0, rgba(0,0,0,.5) 24px, rgba(0,0,0,.3) 52px, rgba(0,0,0,.12) 84px, transparent 125px, transparent 370px, rgba(0,0,0,.05) 400px, rgba(0,0,0,.13) 460px, rgba(0,0,0,.22) 512px, rgba(0,0,0,.3) 560px, rgba(0,0,0,.48) 585px, rgba(0,0,0,.62) 608px); }
.ptop { position: absolute; left: 28px; right: 22px; top: 16px; height: 40px; display: flex; align-items: center; }
.plist { width: 26px; height: 25px; margin-top: 5px; }
.vtitle { width: 1170px; padding-left: 18px; font: 27px/40px Roboto, sans-serif; letter-spacing: -.01px; white-space: nowrap; color: #eee; text-shadow: 0 0 3px rgba(0,0,0,.6); }
.later { width: 30px; height: 30px; margin-left: 18px; }
.share { width: 30px; height: 25px; margin-left: 24px; }
.pbot { position: absolute; left: 24px; right: 24px; bottom: 0; height: 59px; }
.progress { height: 5px; background: rgba(255,255,255,.2); display: flex; }
.progress i { height: 5px; } .played { width: 782px; background: #f00; } .loaded { width: 70px; background: rgba(255,255,255,.4); }
.pctl { height: 54px; display: flex; align-items: center; padding-left: 18px; }
.c-prev, .c-next { width: 18px; height: 18px; }
.c-play { width: 19px; height: 24px; margin-left: 39px; }
.c-next { margin-left: 38px; }
.c-vol { width: 28px; height: 26px; margin-left: 30px; }
.time { width: 437px; padding-left: 19px; font: 20px/50px Roboto, sans-serif; color: #e4e4e4; text-shadow: 0 0 2px rgba(0,0,0,.6); white-space: nowrap; }
.c-chev { width: 12px; height: 8px; margin-top: -7px; }
.c-gear { width: 24px; height: 24px; margin-left: 551px; }
.c-full { width: 24px; height: 24px; margin-left: 30px; }

.taskbar { margin-top: 7px; height: 40px; flex: none; display: flex; background: #01040b; color: #fff; }
.start { width: 48px; display: grid; place-items: center; } .start svg { width: 16px; height: 16px; }
.search { width: 344px; background: #333; color: #a6a6a6; font-size: 14.500px; line-height: 40px; padding-left: 8px; letter-spacing: -.2px; }
.tv { width: 51px; display: grid; place-items: center; padding-right: 3px; } .tv svg { width: 20px; height: 14px; }
.app { width: 49px; display: grid; place-items: center; } .app svg { width: 22px; height: 22px; }
.app.on { width: 48px; background: #33373d; border-bottom: 2px solid #76b9ed; padding-top: 1px; }
.tray { margin-left: auto; display: flex; align-items: center; width: 310px; font-size: 12px; letter-spacing: -.4px; }
.desk { width: 50px; } .more { width: 18px; font-size: 16px; margin-top: -24px; }
.tricons { width: 120px; height: 24px; }
.clock { width: 70px; margin-left: 1px; text-align: center; line-height: 18px; display: flex; flex-direction: column; }
.note { width: 16px; height: 16px; margin-left: 10px; }
.peek { width: 1px; height: 40px; background: #777; margin-left: 20px; }
```
